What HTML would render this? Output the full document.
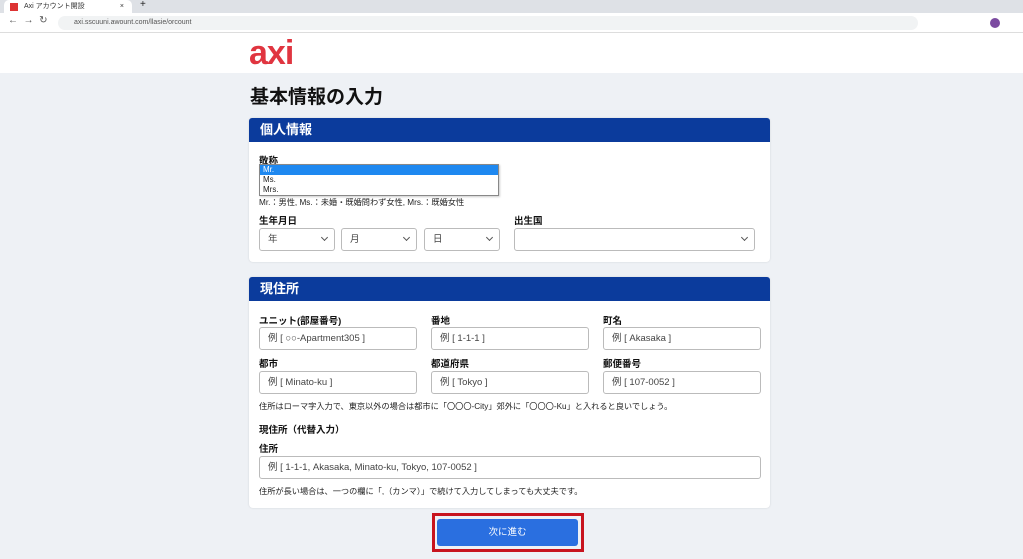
<!DOCTYPE html>
<html><head><meta charset="utf-8"><style>
*{box-sizing:border-box;margin:0;padding:0}
body{width:1023px;height:559px;overflow:hidden;background:#eef1f5;font-family:"Liberation Sans","Noto Sans CJK JP",sans-serif;color:#222;position:relative}
.a{position:absolute}
.tabbar{left:0;top:0;width:1023px;height:13px;background:#dee1e6}
.tab{left:4px;top:0;width:128px;height:13px;background:#fff;border-radius:5px 5px 0 0;font-size:7px;line-height:13px;padding-left:20px;color:#333}
.addr{left:0;top:13px;width:1023px;height:20px;background:#fff;border-bottom:1px solid #ddd}
.url{left:58px;top:16px;width:860px;height:14px;background:#f1f3f4;border-radius:7px;font-size:7px;line-height:14px;padding-left:16px;color:#555}
.head{left:0;top:33px;width:1023px;height:40px;background:#fff}
.card{background:#fff;border-radius:4px;box-shadow:0 0 2px rgba(0,0,0,.12)}
.ch{background:#0b3b9c;color:#fff;font-weight:bold;font-size:13px;line-height:24px;padding-left:11px;border-radius:3px 3px 0 0;height:24px}
.lbl{font-size:9.5px;font-weight:bold;color:#111}
.inp{border:1px solid #bbb;border-radius:3px;background:#fff;font-size:9.5px;line-height:21px;padding-left:8px;color:#444;height:23px}
.sm{font-size:8.2px;color:#222}
.chev{position:absolute;right:7px;top:6px;width:5px;height:5px;border-right:1px solid #555;border-bottom:1px solid #555;transform:rotate(45deg)}
</style></head><body>
<div class="a tabbar"></div>
<div class="a tab">Axi アカウント開設<span style="position:absolute;left:6px;top:3px;width:8px;height:8px;background:#d33"></span><span style="position:absolute;right:8px;top:0">×</span></div>
<div class="a" style="left:140px;top:-1px;font-size:10px">+</div>
<div class="a addr"></div>
<div class="a" style="left:8px;top:15px;font-size:10px;color:#555">←&nbsp;&nbsp;→&nbsp;&nbsp;↻</div>
<div class="a url">axi.sscuuni.awount.com/llasie/orcount</div>
<div class="a" style="left:990px;top:18px;width:10px;height:10px;border-radius:50%;background:#7b4aa0"></div>
<div class="a head"></div>
<div class="a" style="left:249px;top:33px;font-size:34px;font-weight:bold;color:#e03540;letter-spacing:-1px;line-height:40px">axi</div>
<div class="a" style="left:250px;top:82px;font-size:19px;font-weight:bold;color:#111">基本情報の入力</div>

<div class="a card" style="left:249px;top:118px;width:521px;height:144px">
<div class="ch">個人情報</div></div>
<div class="a lbl" style="left:259px;top:153px">敬称</div>
<div class="a" style="left:259px;top:164px;width:240px;height:32px;border:1px solid #888;background:#fff;font-size:8px;box-shadow:1px 1px 2px rgba(0,0,0,.2)">
<div style="background:#1e88f0;color:#fff;height:10px;line-height:10px;padding-left:3px">Mr.</div>
<div style="height:10px;line-height:10px;padding-left:3px">Ms.</div>
<div style="height:10px;line-height:10px;padding-left:3px">Mrs.</div></div>
<div class="a sm" style="left:259px;top:196px">Mr.：男性, Ms.：未婚・既婚問わず女性, Mrs.：既婚女性</div>
<div class="a lbl" style="left:259px;top:213px">生年月日</div>
<div class="a lbl" style="left:514px;top:213px">出生国</div>
<div class="a inp" style="left:259px;top:228px;width:76px">年<span class="chev"></span></div>
<div class="a inp" style="left:341px;top:228px;width:76px">月<span class="chev"></span></div>
<div class="a inp" style="left:424px;top:228px;width:76px">日<span class="chev"></span></div>
<div class="a inp" style="left:514px;top:228px;width:241px"><span class="chev"></span></div>

<div class="a card" style="left:249px;top:277px;width:521px;height:231px">
<div class="ch">現住所</div></div>
<div class="a lbl" style="left:259px;top:313px">ユニット(部屋番号)</div>
<div class="a lbl" style="left:431px;top:313px">番地</div>
<div class="a lbl" style="left:603px;top:313px">町名</div>
<div class="a inp" style="left:259px;top:327px;width:158px">例 [ ○○-Apartment305 ]</div>
<div class="a inp" style="left:431px;top:327px;width:158px">例 [ 1-1-1 ]</div>
<div class="a inp" style="left:603px;top:327px;width:158px">例 [ Akasaka ]</div>
<div class="a lbl" style="left:259px;top:356px">都市</div>
<div class="a lbl" style="left:431px;top:356px">都道府県</div>
<div class="a lbl" style="left:603px;top:356px">郵便番号</div>
<div class="a inp" style="left:259px;top:371px;width:158px">例 [ Minato-ku ]</div>
<div class="a inp" style="left:431px;top:371px;width:158px">例 [ Tokyo ]</div>
<div class="a inp" style="left:603px;top:371px;width:158px">例 [ 107-0052 ]</div>
<div class="a sm" style="left:259px;top:400px">住所はローマ字入力で、東京以外の場合は都市に「〇〇〇-City」郊外に「〇〇〇-Ku」と入れると良いでしょう。</div>
<div class="a lbl" style="left:259px;top:422px">現住所（代替入力）</div>
<div class="a lbl" style="left:259px;top:441px">住所</div>
<div class="a inp" style="left:259px;top:456px;width:502px">例 [ 1-1-1, Akasaka, Minato-ku, Tokyo, 107-0052 ]</div>
<div class="a sm" style="left:259px;top:485px">住所が長い場合は、一つの欄に「,（カンマ）」で続けて入力してしまっても大丈夫です。</div>

<div class="a" style="left:432px;top:513px;width:152px;height:39px;border:3px solid #c8141e"></div>
<div class="a" style="left:437px;top:519px;width:141px;height:27px;background:#2a6fe0;border-radius:3px;color:#fff;font-size:9.5px;line-height:27px;text-align:center">次に進む</div>
</body></html>
